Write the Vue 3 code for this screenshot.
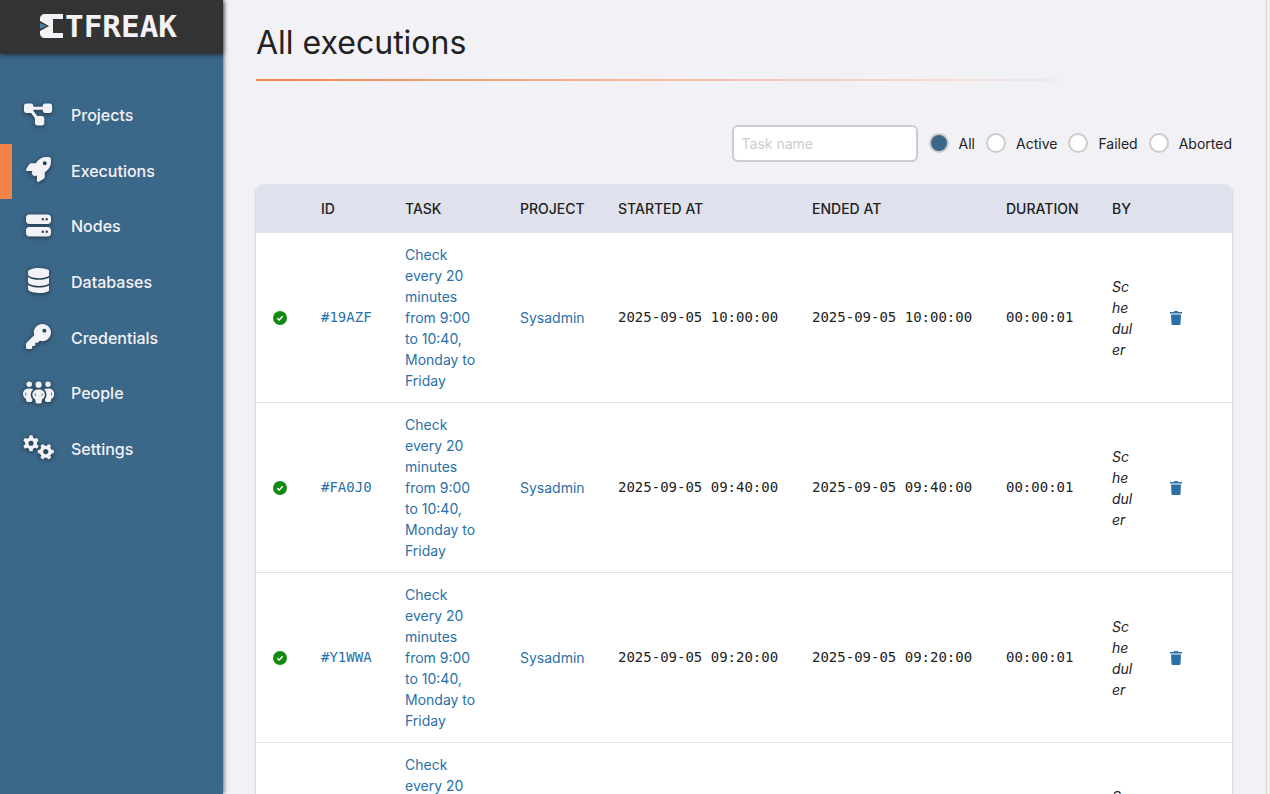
<script setup>
import { ref } from 'vue'

const filter = ref('All')
const filters = ['All', 'Active', 'Failed', 'Aborted']

const nav = [
  {
    label: 'Projects',
    width: 576,
    path: 'M0 80C0 53.5 21.5 32 48 32h96c26.5 0 48 21.5 48 48V96H384V80c0-26.5 21.5-48 48-48h96c26.5 0 48 21.5 48 48v96c0 26.5-21.5 48-48 48H432c-26.5 0-48-21.5-48-48V160H192v16c0 1.7-.1 3.4-.3 5L272 288h96c26.5 0 48 21.5 48 48v96c0 26.5-21.5 48-48 48H272c-26.5 0-48-21.5-48-48V336c0-1.7 .1-3.4 .3-5L144 224H48c-26.5 0-48-21.5-48-48V80z',
  },
  {
    label: 'Executions',
    active: true,
    width: 512,
    path: 'M156.6 384.9L125.7 354c-8.5-8.5-11.5-20.8-7.7-32.2c3-8.9 7-20.5 11.8-33.8L24 288c-8.6 0-16.6-4.6-20.9-12.1s-4.2-16.7 .2-24.1l52.5-88.5c13-21.9 36.5-35.3 61.9-35.3l82.3 0c2.4-4 4.8-7.7 7.2-11.3C289.1-4.1 411.1-8.1 483.9 5.3c11.6 2.1 20.6 11.2 22.8 22.8c13.4 72.9 9.3 194.8-111.4 276.7c-3.5 2.4-7.3 4.8-11.3 7.2v82.3c0 25.4-13.4 49-35.3 61.9l-88.5 52.5c-7.4 4.4-16.6 4.5-24.1 .2s-12.1-12.2-12.1-20.9V380.8c-14.1 4.9-26.4 8.9-35.7 11.9c-11.2 3.6-23.4 .5-31.8-7.8zM384 168a40 40 0 1 0 0-80 40 40 0 1 0 0 80z',
  },
  {
    label: 'Nodes',
    width: 512,
    path: 'M64 32C28.7 32 0 60.7 0 96v64c0 35.3 28.7 64 64 64H448c35.3 0 64-28.7 64-64V96c0-35.3-28.7-64-64-64H64zm280 72a24 24 0 1 1 0 48 24 24 0 1 1 0-48zm56 24a24 24 0 1 1 48 0 24 24 0 1 1 -48 0zM64 288c-35.3 0-64 28.7-64 64v64c0 35.3 28.7 64 64 64H448c35.3 0 64-28.7 64-64V352c0-35.3-28.7-64-64-64H64zm280 72a24 24 0 1 1 0 48 24 24 0 1 1 0-48zm56 24a24 24 0 1 1 48 0 24 24 0 1 1 -48 0z',
  },
  {
    label: 'Databases',
    width: 448,
    path: 'M448 80v48c0 44.2-100.3 80-224 80S0 172.2 0 128V80C0 35.8 100.3 0 224 0S448 35.8 448 80zM393.2 214.7c20.8-7.4 39.9-16.9 54.8-28.6V288c0 44.2-100.3 80-224 80S0 332.2 0 288V186.1c14.9 11.8 34 21.2 54.8 28.6C99.7 230.7 159.5 240 224 240s124.3-9.3 169.2-25.3zM0 346.1c14.9 11.8 34 21.2 54.8 28.6C99.7 390.7 159.5 400 224 400s124.3-9.3 169.2-25.3c20.8-7.4 39.9-16.9 54.8-28.6V432c0 44.2-100.3 80-224 80S0 476.2 0 432V346.1z',
  },
  {
    label: 'Credentials',
    width: 512,
    path: 'M336 352c97.2 0 176-78.8 176-176S433.2 0 336 0S160 78.8 160 176c0 18.7 2.9 36.8 8.3 53.7L7 391c-4.5 4.5-7 10.6-7 17v80c0 13.3 10.7 24 24 24h80c13.3 0 24-10.7 24-24V448h40c13.3 0 24-10.7 24-24V384h40c6.4 0 12.5-2.5 17-7l33.3-33.3c16.9 5.4 35 8.3 53.7 8.3zM376 96a40 40 0 1 1 0 80 40 40 0 1 1 0-80z',
  },
  {
    label: 'People',
    width: 640,
    path: 'M72 88a56 56 0 1 1 112 0A56 56 0 1 1 72 88zM64 245.7C54 256.9 48 271.8 48 288s6 31.1 16 42.3V245.7zm144.4-49.3C178.7 222.7 160 261.2 160 304c0 34.3 12 65.8 32 90.5V416c0 17.7-14.3 32-32 32H96c-17.7 0-32-14.3-32-32V389.2C26.2 371.2 0 332.7 0 288c0-61.9 50.1-112 112-112h32c24 0 46.2 7.5 64.4 20.3zM448 416V394.5c20-24.7 32-56.2 32-90.5c0-42.8-18.7-81.3-48.4-107.7C449.8 183.5 472 176 496 176h32c61.9 0 112 50.1 112 112c0 44.7-26.2 83.2-64 101.2V416c0 17.7-14.3 32-32 32H480c-17.7 0-32-14.3-32-32zm8-328a56 56 0 1 1 112 0A56 56 0 1 1 456 88zM576 245.7v84.7c10-11.3 16-26.1 16-42.3s-6-31.1-16-42.3zM320 32a64 64 0 1 1 0 128 64 64 0 1 1 0-128zM240 304c0 16.2 6 31 16 42.3V261.7c-10 11.3-16 26.1-16 42.3zm144-42.3v84.7c10-11.3 16-26.1 16-42.3s-6-31.1-16-42.3zM448 304c0 44.7-26.2 83.2-64 101.2V448c0 17.7-14.3 32-32 32H288c-17.7 0-32-14.3-32-32V405.2c-37.8-18-64-56.5-64-101.2c0-61.9 50.1-112 112-112h32c61.9 0 112 50.1 112 112z',
  },
  {
    label: 'Settings',
    width: 640,
    gears: [
      { x: 164, y: 170, turn: 0 },
      { x: 466, y: 342, turn: 30 },
    ],
  },
]

const rows = [
  { id: '#19AZF', time: '2025-09-05 10:00:00' },
  { id: '#FA0J0', time: '2025-09-05 09:40:00' },
  { id: '#Y1WWA', time: '2025-09-05 09:20:00' },
  { id: '#K7M2D', time: '2025-09-05 09:00:00' },
]
</script>

<template>
  <div class="layout">
    <aside class="sidebar">
      <a class="brand" href="#" aria-label="CTFreak">
        <svg class="mark" viewBox="0 0 23 24" aria-hidden="true">
          <path d="M5 0H23V5H13V19H23V24H5C2 24 0 22 0 19V17L9 12L0 7V5C0 2 2 0 5 0Z" fill="#f3f2f7" />
          <path d="M0 9L7 12L0 15Z" fill="#4f7d9f" />
        </svg>
        <span>TFREAK</span>
      </a>
      <nav>
        <a v-for="item in nav" :key="item.label" href="#" :class="{ active: item.active }">
          <span class="glyph">
            <svg :viewBox="`0 0 ${item.width} 512`" aria-hidden="true">
              <path v-if="item.path" :d="item.path" />
              <g v-for="g in item.gears" :key="g.x" :transform="`translate(${g.x} ${g.y}) rotate(${g.turn})`">
                <path d="M0-124A124 124 0 1 1 0 124A124 124 0 1 1 0-124ZM0-52A52 52 0 1 0 0 52A52 52 0 1 0 0-52Z" />
                <rect v-for="n in 6" :key="n" x="-38" y="-164" width="76" height="76" rx="22" :transform="`rotate(${n * 60})`" />
              </g>
            </svg>
          </span>
          {{ item.label }}
        </a>
      </nav>
    </aside>

    <main>
      <h1>All executions</h1>
      <form class="filters" @submit.prevent>
        <input type="text" placeholder="Task name" aria-label="Task name" />
        <label v-for="f in filters" :key="f">
          <input v-model="filter" type="radio" name="status" :value="f" />{{ f }}
        </label>
      </form>

      <div class="card">
        <table>
          <colgroup>
            <col class="c-status" /><col class="c-id" /><col class="c-task" /><col class="c-project" />
            <col class="c-time" /><col class="c-time" /><col class="c-duration" /><col class="c-by" /><col />
          </colgroup>
          <thead>
            <tr>
              <th></th><th>ID</th><th>TASK</th><th>PROJECT</th><th>STARTED AT</th>
              <th>ENDED AT</th><th>DURATION</th><th>BY</th><th></th>
            </tr>
          </thead>
          <tbody>
            <tr v-for="row in rows" :key="row.id">
              <td class="status">
                <svg class="ok" viewBox="0 0 14 14" role="img" aria-label="Success">
                  <circle cx="7" cy="7" r="7" fill="#128a12" />
                  <path d="M4.300 7.200L6.200 9L9.700 5.300" fill="none" stroke="#fff" stroke-width="1.500" />
                </svg>
              </td>
              <td class="mono"><a href="#">{{ row.id }}</a></td>
              <td class="task"><a href="#">Check every 20 minutes from 9:00 to 10:40, Monday to Friday</a></td>
              <td><a href="#">Sysadmin</a></td>
              <td class="mono">{{ row.time }}</td>
              <td class="mono">{{ row.time }}</td>
              <td class="mono">00:00:01</td>
              <td class="by">Scheduler</td>
              <td>
                <button type="button" aria-label="Delete">
                  <svg viewBox="0 0 12 14" aria-hidden="true">
                    <path d="M0 1H3.500L4.500 0H7.500L8.500 1H12V2.500H0ZM1 3.500H11L10.500 13Q10.400 14 9.500 14H2.500Q1.600 14 1.500 13Z" />
                  </svg>
                </button>
              </td>
            </tr>
          </tbody>
        </table>
      </div>
    </main>
    <div class="gutter"></div>
  </div>
</template>

<style>
body {
  background: #f2f1f6;
}
</style>

<style scoped>
.layout {
  display: flex;
  height: 100vh;
  overflow: hidden;
  background: #f2f1f6;
  color: #222;
  font: 14px/21px Inter, "Liberation Sans", sans-serif;
}
a {
  color: #2a70a8;
  text-decoration: none;
}
.sidebar {
  flex: 0 0 223px;
  background: #3b6788;
  box-shadow: 0 0 5px rgba(0, 0, 0, 0.8);
}
.brand {
  display: flex;
  align-items: center;
  box-sizing: border-box;
  height: 54px;
  padding-left: 40px;
  gap: 2px;
  background: #333;
  box-shadow: 0 1px 5px rgba(0, 0, 0, 0.5);
  color: #f3f2f7;
  font: bold 31px/52px "DejaVu Sans Mono", monospace;
}
.brand span {
  padding-bottom: 2px;
}
.mark {
  width: 23px;
  height: 24px;
  padding-bottom: 2px;
}
nav {
  display: grid;
  grid-auto-rows: 1fr;
  height: 389px;
  margin-top: 34px;
}
nav a {
  display: flex;
  align-items: center;
  border-left: 12px solid transparent;
  color: #f3f2f7;
  font-size: 16px;
  font-weight: 500;
}
nav a.active {
  border-color: #f38446;
}
.glyph {
  display: flex;
  justify-content: center;
  width: 53px;
  margin-right: 6px;
  padding-bottom: 3px;
}
.glyph svg {
  height: 25px;
  fill: #f3f2f7;
  filter: drop-shadow(0 1px 2px rgba(0, 0, 0, 0.5));
}
main {
  flex: 1;
  min-width: 0;
  padding: 0 34px 0 33px;
}
h1 {
  margin: 0;
  padding: 20px 0 14px;
  border-bottom: 2px solid;
  border-image: linear-gradient(90deg, #f38446, rgba(243, 132, 70, 0.5) 40%, rgba(243, 132, 70, 0) 88%) 1;
  font-size: 32px;
  line-height: 45px;
  font-weight: 400;
}
.filters {
  display: flex;
  justify-content: flex-end;
  align-items: center;
  gap: 11px;
  margin: 44px 0 22px;
}
.filters label {
  display: flex;
  align-items: center;
  gap: 10px;
  padding-bottom: 1px;
}
.filters input[type="text"] {
  box-sizing: border-box;
  width: 186px;
  height: 37px;
  padding: 0 8px;
  border: 2px solid #ccc;
  border-radius: 6px;
  background: #fff;
  color: #222;
  font: inherit;
}
.filters input::placeholder {
  color: #ccc;
}
.filters input[type="radio"] {
  appearance: none;
  box-sizing: border-box;
  width: 20px;
  height: 20px;
  margin: 0;
  border: 2px solid #ccc;
  border-radius: 50%;
  background: #fff;
}
.filters input[type="radio"]:checked {
  background: #3b6788;
}
.card {
  overflow: hidden;
  border-radius: 8px;
  background: #fff;
  box-shadow: 0 1px 2px rgba(0, 0, 0, 0.35);
}
table {
  width: 100%;
  table-layout: fixed;
  border-collapse: separate;
  border-spacing: 0;
}
.c-status { width: 49px; }
.c-id { width: 84px; }
.c-task { width: 115px; }
.c-project { width: 98px; }
.c-time { width: 194px; }
.c-duration { width: 106px; }
.c-by { width: 58px; }
th {
  padding: 14px 16px;
  background: #dfe1ec;
  font-weight: 500;
  text-align: left;
  white-space: nowrap;
}
td {
  padding: 11px 16px;
  border-bottom: 1px solid #dfe1ec;
}
.status {
  padding-left: 17px;
}
.task {
  padding-right: 24px;
}
.mono {
  font-family: "DejaVu Sans Mono", monospace;
  white-space: nowrap;
}
.by {
  padding-right: 19px;
  font-style: italic;
  overflow-wrap: anywhere;
}
.ok {
  display: block;
  width: 14px;
  height: 14px;
}
button {
  display: block;
  padding: 0;
  border: 0;
  background: none;
}
button svg {
  display: block;
  width: 12px;
  height: 14px;
  fill: #2a70a8;
}
.gutter {
  flex: 0 0 3px;
  border-left: 1px solid #d6d6d0;
  background: #f3f2ee;
}
</style>
